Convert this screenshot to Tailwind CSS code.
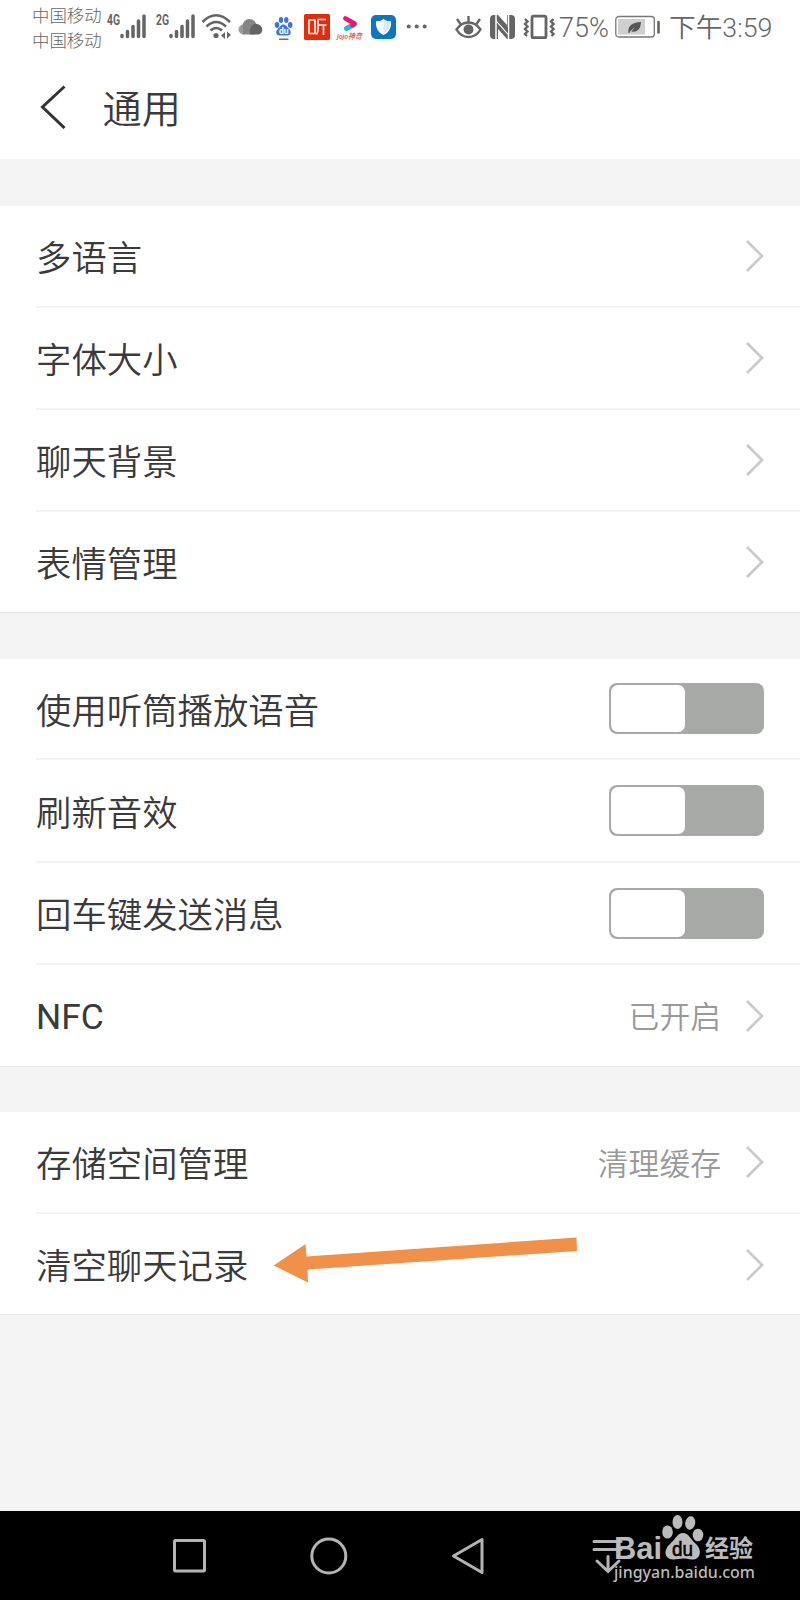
<!DOCTYPE html>
<html lang="zh-CN">
<head>
  <meta charset="UTF-8" />
  <meta name="viewport" content="width=device-width, initial-scale=1.0"/>
  <title>通用</title>
  <script src="https://cdn.jsdelivr.net/npm/@tailwindcss/browser@4"></script>
</head>
<body class="bg-[#f4f4f4]">
<svg class="hidden">
  <symbol id="chevron" viewBox="0 0 20 34">
    <path d="M2 2L17 17L2 32" fill="none" stroke="#cacaca" stroke-width="2.8"/>
  </symbol>
  <symbol id="signal" viewBox="0 0 26 25">
    <path d="M2 22.5V21.5M7.5 22.5V17.5M13 22.5V12.5M18.5 22.5V7M24 22.5V2" stroke="#646464" stroke-width="3.5" stroke-linecap="round"/>
  </symbol>
</svg>

<div class="w-[800px] h-[1600px] flex flex-col overflow-hidden font-[350] text-[#3a3a3a] font-['Roboto','Noto_Sans_CJK_SC',sans-serif]">

  <!-- Status bar -->
  <div class="h-[54px] bg-white flex items-start shrink-0 text-[#666]">
    <div class="ml-8 mt-1 w-[72px] text-[17.4px] leading-[24.5px] whitespace-nowrap font-light text-[#666]">
      <p>中国移动</p>
      <p>中国移动</p>
    </div>
    <svg class="ml-[2px] mt-[10px] w-[16px] h-5" viewBox="0 0 16 20"><text x="1" y="15" textLength="13" lengthAdjust="spacingAndGlyphs" font-size="15" font-weight="700" fill="#646464">4G</text></svg>
    <svg class="-ml-[2px] mt-[14px] w-[26px] h-[25px]"><use href="#signal"/></svg>
    <svg class="ml-[9px] mt-[10px] w-[16px] h-5" viewBox="0 0 16 20"><text x="1" y="15" textLength="13" lengthAdjust="spacingAndGlyphs" font-size="15" font-weight="700" fill="#646464">2G</text></svg>
    <svg class="-ml-[2px] mt-[14px] w-[26px] h-[25px]"><use href="#signal"/></svg>
    <!-- wifi -->
    <svg class="ml-[6px] mt-[13px] w-[31px] h-[27px]" viewBox="0 0 31 27" fill="none" stroke="#646464" stroke-width="2.6">
      <path d="M1.500 9Q15 -4.500 29 9M5.500 13.500Q15 4.500 25 13.500M9.500 17.500Q15 12.500 21 17.500"/>
      <circle cx="15" cy="22.500" r="2.600" fill="#646464" stroke="none"/>
      <path d="M20 22.500L24 19V26ZM30 22L26 18.500V25.500Z" fill="#646464" stroke="none"/>
    </svg>
    <!-- cloud -->
    <svg class="ml-[6px] mt-[18px] w-[25px] h-[18px]" viewBox="0 0 25 18">
      <circle cx="5.500" cy="11.500" r="5" fill="#9b9b9b"/>
      <circle cx="11.500" cy="8" r="7" fill="#858585"/>
      <path d="M5 11H17V16.500H5Z" fill="#858585"/>
      <path d="M12 16.500C11 9 15 5 19 6C26 7 26 16.500 19 16.500Z" fill="#646464"/>
    </svg>
    <!-- paw app -->
    <svg class="ml-[11px] mt-[16px] w-[19px] h-[25px]" viewBox="0 0 19 25" fill="#3f76d6">
      <ellipse cx="3" cy="9" rx="2.300" ry="2.900"/>
      <ellipse cx="7" cy="4" rx="2.200" ry="3"/>
      <ellipse cx="12.300" cy="4" rx="2.200" ry="3"/>
      <ellipse cx="16.200" cy="9" rx="2.300" ry="2.900"/>
      <path d="M9.500 8.500C12 8.500 13 11 15.500 13.500C18 16.500 16.500 19.500 13.500 19.500H5.500C2.500 19.500 1 16.500 3.500 13.500C6 11 7 8.500 9.500 8.500Z"/>
      <text x="5" y="17.500" font-size="8.500" font-weight="700" fill="#fff">du</text>
      <path d="M5 22.500H10V24H5Z" fill="#d9413f"/>
      <path d="M10 22.500H14.500V24H10Z"/>
    </svg>
    <!-- 听 app -->
    <svg class="ml-[11px] mt-[14px] w-[26px] h-[26px]" viewBox="0 0 26 26" fill="none" stroke="#fff" stroke-width="1.6">
      <rect width="26" height="26" rx="1.500" fill="#e42c0c" stroke="none"/>
      <path d="M5 6H11V19.500H5ZM22 5.500H14V15Q14 18 12.500 20.500M14 11H22.500M19.500 11V21"/>
    </svg>
    <!-- video app -->
    <svg class="ml-[6px] mt-[15px] w-[29px] h-[28px]" viewBox="0 0 29 28">
      <path d="M10.500 13.500L18 9.500" stroke="#19b9e0" stroke-width="5" stroke-linecap="round"/>
      <path d="M9.500 3.500L18.500 8.500L16.500 10" fill="none" stroke="#f0146e" stroke-width="4.800" stroke-linecap="round" stroke-linejoin="round"/>
      <text x="1" y="23.500" textLength="25" lengthAdjust="spacingAndGlyphs" font-size="8" font-style="italic" font-weight="500" fill="#d9504c">jojo神奇</text>
    </svg>
    <!-- shield app -->
    <svg class="ml-[6px] mt-[15px] w-[25px] h-[24px]" viewBox="0 0 25 24">
      <rect width="25" height="24" rx="5" fill="#0b76c3"/>
      <path d="M12.500 4C15 6 17.500 6.300 20 6.300C20.500 13 18 17.500 12.500 20C7 17.500 4.500 13 5 6.300C7.500 6.300 10 6 12.500 4Z" fill="#fff"/>
      <path d="M12.500 5V19C17 17 19 13 19 7Q15 7 12.500 5Z" fill="#dbe9f3"/>
    </svg>
    <svg class="ml-[10px] mt-[24px] w-[21px] h-[5px]" viewBox="0 0 21 5" fill="#646464">
      <circle cx="2.700" cy="2.500" r="2"/><circle cx="10.700" cy="2.500" r="2"/><circle cx="18.700" cy="2.500" r="2"/>
    </svg>
    <!-- eye -->
    <svg class="ml-[28px] mt-[15px] w-[27px] h-[24px]" viewBox="0 0 27 24" fill="none" stroke="#646464" stroke-width="2.4">
      <path d="M1.500 14.500Q6 7.500 13.500 7.500T25.500 14.500Q21 22 13.500 22T1.500 14.500Z"/>
      <circle cx="13.500" cy="14.500" r="5" fill="#646464" stroke="none"/>
      <path d="M13.500 1V7M5.500 9L2 4M21.500 9L25 4"/>
    </svg>
    <!-- nfc -->
    <svg class="ml-[8px] mt-[15px] w-[26px] h-[24px]" viewBox="0 0 26 24">
      <rect width="25" height="24" rx="4" fill="#646464"/>
      <path d="M6 24V5.500L18.500 19.500V0M6 5.500V0M18.500 19.500V24" fill="none" stroke="#fff" stroke-width="1.500"/>
      <path d="M8 0L17 10V0ZM8 24V14L17 24Z" fill="#fff"/>
      <path d="M7 0L18 13V18.500L7 6Z" fill="#646464"/>
    </svg>
    <!-- vibrate -->
    <svg class="ml-[7px] mt-[14px] w-[32px] h-[26px]" viewBox="0 0 32 26" fill="none" stroke="#646464" stroke-width="2.400">
      <rect x="9" y="2.200" width="14" height="21.500" rx="1.500" stroke-width="2.800"/>
      <path d="M2 5L4.500 7.500L2 10L4.500 12.500L2 15L4.500 17.500L2 20L4 22M30.500 5L28 7.500L30.500 10L28 12.500L30.500 15L28 17.500L30.500 20L28.500 22"/>
    </svg>
    <span class="ml-[4px] mt-[12px] w-[49px] text-[27px] leading-8 whitespace-nowrap">75%</span>
    <!-- battery -->
    <svg class="ml-[7px] mt-[15px] w-[46px] h-[24px]" viewBox="0 0 46 24">
      <rect x=".8" y="1.500" width="38.500" height="20.500" rx="3" fill="#fff" stroke="#777" stroke-width="1.300"/>
      <rect x="3" y="4" width="27" height="15.500" fill="#cfcfcf"/>
      <path d="M13.500 18C12.500 11 17 7.500 26 7C25.500 14.500 22.500 17.500 16.500 16.500L20 12L15 16.500L14.500 18Z" fill="#555"/>
      <path d="M43.500 7V17.500" stroke="#646464" stroke-width="2.600" stroke-linecap="round"/>
    </svg>
    <span class="ml-[8px] mt-[12px] text-[26.7px] leading-8 whitespace-nowrap">下午3:59</span>
  </div>

  <!-- Title bar -->
  <header class="h-[105px] bg-white flex items-center shrink-0 pl-10">
    <svg class="w-[26px] h-[44px]" viewBox="0 0 26 44"><path d="M24.500 1.500L2.500 22L24.500 43" fill="none" stroke="#333" stroke-width="3"/></svg>
    <h1 class="ml-[36.5px] mt-2 text-[39.2px] leading-none">通用</h1>
  </header>

  <section class="mt-[47px] h-[407px] bg-white shrink-0 pl-9 text-[35.4px] border-b border-[#e9e9e9]">
    <div class="h-[100px] pr-[35px] flex items-center justify-between"><span class="mt-[7px]">多语言</span><svg class="w-5 h-[34px]"><use href="#chevron"/></svg></div>
    <div class="h-[102px] pr-[35px] flex items-center justify-between border-t-2 border-[#f3f3f3]"><span class="mt-[7px]">字体大小</span><svg class="w-5 h-[34px]"><use href="#chevron"/></svg></div>
    <div class="h-[102px] pr-[35px] flex items-center justify-between border-t-2 border-[#f3f3f3]"><span class="mt-[7px]">聊天背景</span><svg class="w-5 h-[34px]"><use href="#chevron"/></svg></div>
    <div class="h-[102px] pr-[35px] flex items-center justify-between border-t-2 border-[#f3f3f3]"><span class="mt-[7px]">表情管理</span><svg class="w-5 h-[34px]"><use href="#chevron"/></svg></div>
  </section>

  <section class="mt-[46px] h-[408px] bg-white shrink-0 pl-9 text-[35.4px] border-b border-[#e9e9e9]">
    <div class="h-[99px] pr-9 flex items-center justify-between">
      <span class="mt-[8px]">使用听筒播放语音</span>
      <div class="w-[155px] h-[51px] rounded-[8px] bg-[#a7a9a6] p-[2px]"><div class="w-[74px] h-full rounded-[7px] bg-white"></div></div>
    </div>
    <div class="h-[103px] pr-9 flex items-center justify-between border-t-2 border-[#f3f3f3]">
      <span class="mt-[8px]">刷新音效</span>
      <div class="w-[155px] h-[51px] rounded-[8px] bg-[#a7a9a6] p-[2px]"><div class="w-[74px] h-full rounded-[7px] bg-white"></div></div>
    </div>
    <div class="h-[102px] pr-9 flex items-center justify-between border-t-2 border-[#f3f3f3]">
      <span class="mt-[7px]">回车键发送消息</span>
      <div class="w-[155px] h-[51px] rounded-[8px] bg-[#a7a9a6] p-[2px]"><div class="w-[74px] h-full rounded-[7px] bg-white"></div></div>
    </div>
    <div class="h-[103px] pr-[35px] flex items-center border-t-2 border-[#f3f3f3]">
      <span class="mt-[4px] font-normal">NFC</span>
      <span class="mt-[6px] ml-auto mr-6 text-[30.8px] text-[#999]">已开启</span>
      <svg class="w-5 h-[34px]"><use href="#chevron"/></svg>
    </div>
  </section>

  <section class="mt-[45px] h-[203px] bg-white shrink-0 pl-9 text-[35.4px] border-b border-[#e9e9e9]">
    <div class="h-[100px] pr-[35px] flex items-center">
      <span class="mt-[7px]">存储空间管理</span>
      <span class="mt-[7px] ml-auto mr-6 text-[30.8px] text-[#999]">清理缓存</span>
      <svg class="w-5 h-[34px]"><use href="#chevron"/></svg>
    </div>
    <div class="relative h-[103px] pr-[35px] flex items-center justify-between border-t-2 border-[#f3f3f3]">
      <span class="mt-[6px]">清空聊天记录</span>
      <svg class="w-5 h-[34px]"><use href="#chevron"/></svg>
      <!-- pointer arrow -->
      <svg class="absolute left-[237px] top-[22px] w-[306px] h-[48px]" viewBox="0 0 306 48"><path d="M.7 29.500L32.500 8L33.500 20.500L303.500 1.500L304 15L34.500 33.500L35 46.500Z" fill="#f19149"/></svg>
    </div>
  </section>

  <!-- Navigation bar -->
  <nav class="relative mt-auto h-[89px] shrink-0 bg-black flex items-center pl-[172px]">
    <svg class="w-[35px] h-9" viewBox="0 0 35 36" fill="none" stroke="#b4b4b4" stroke-width="3"><rect x="2.500" y="2.500" width="30" height="30.500" rx="1"/></svg>
    <svg class="ml-[103px] w-[38px] h-[38px]" viewBox="0 0 38 38" fill="none" stroke="#b4b4b4" stroke-width="3"><circle cx="18.800" cy="19" r="17"/></svg>
    <svg class="ml-[103px] w-[34px] h-[38px]" viewBox="0 0 34 38" fill="none" stroke="#b4b4b4" stroke-width="3" stroke-linejoin="round"><path d="M2.500 19L31 2.500V35.500Z"/></svg>
    <svg class="ml-[107px] w-[32px] h-9" viewBox="0 0 32 36" fill="none" stroke="#b4b4b4" stroke-width="3" stroke-linecap="round"><path d="M2 3.500H29M2 11.500H29M16 18.500V33M5 23L16 33.500L27 23"/></svg>

    <!-- watermark -->
    <svg class="absolute left-[610px] top-0 w-[150px] h-[84px]" viewBox="0 0 150 84" fill="#bbb">
      <text x="4" y="47.500" textLength="48" lengthAdjust="spacingAndGlyphs" font-family="Liberation Sans" font-size="32" font-weight="700">Bai</text>
      <ellipse cx="57.500" cy="21" rx="5.300" ry="6.600"/>
      <ellipse cx="67.500" cy="11" rx="5" ry="7"/>
      <ellipse cx="80.200" cy="12" rx="5" ry="6.800" transform="rotate(10 80.200 12)"/>
      <ellipse cx="88" cy="24" rx="5.300" ry="6.300"/>
      <path d="M73 22C79 22 80 28 86 33C93 40 90 49 82 48.500C78 48 76 47.500 73 47.500S67 48.500 63 48.500C54 48 53 39 60 33C66 28 67 22 73 22Z"/>
      <text x="62" y="44.500" textLength="21" lengthAdjust="spacingAndGlyphs" font-family="Liberation Sans" font-size="20" font-weight="400" stroke="#000" stroke-width=".6" fill="#000">du</text>
      <text x="95" y="46" font-family="Noto Sans CJK SC" font-size="24" font-weight="700">经验</text>
      <text x="4" y="66.500" textLength="141" lengthAdjust="spacingAndGlyphs" font-family="Noto Sans" font-size="17" font-weight="500">jingyan.baidu.com</text>
    </svg>
  </nav>
</div>
</body>
</html>
